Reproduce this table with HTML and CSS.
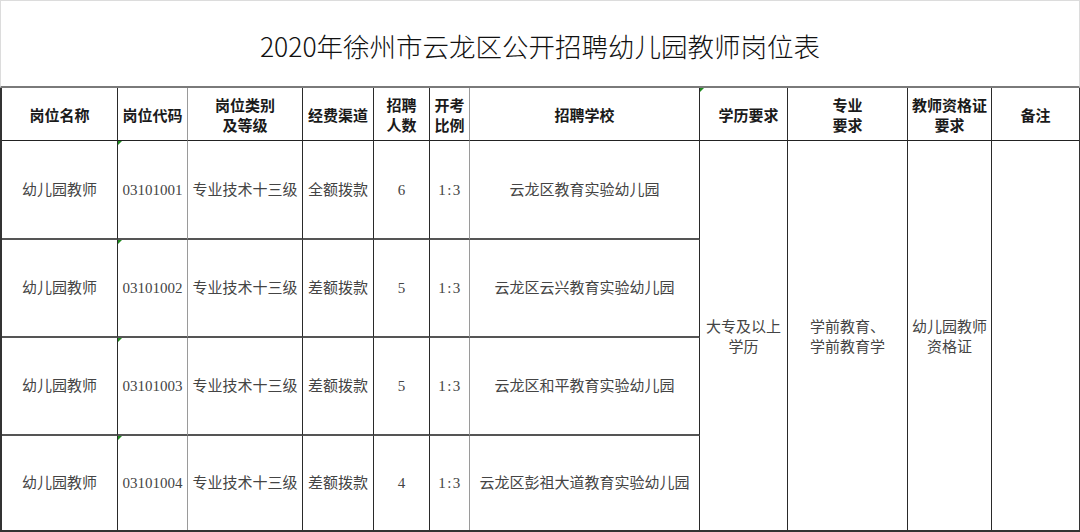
FILE: index.html
```html
<!DOCTYPE html>
<html lang="zh-CN">
<head>
<meta charset="utf-8">
<title>2020年徐州市云龙区公开招聘幼儿园教师岗位表</title>
<link rel="stylesheet" href="styles.css">
</head>
<body>
<div class="sheet">
  <div class="title">2020年徐州市云龙区公开招聘幼儿园教师岗位表</div>
  <div class="grid">
    <div class="c h">岗位名称</div>
    <div class="c h g">岗位代码</div>
    <div class="c h">岗位类别<br>及等级</div>
    <div class="c h">经费渠道</div>
    <div class="c h">招聘<br>人数</div>
    <div class="c h g">开考<br>比例</div>
    <div class="c h">招聘学校</div>
    <div class="c h mark shift">学历要求</div>
    <div class="c h">专业<br>要求</div>
    <div class="c h">教师资格证<br>要求</div>
    <div class="c h last">备注</div>

    <div class="c b">幼儿园教师</div>
    <div class="c b g mark">03101001</div>
    <div class="c b">专业技术十三级</div>
    <div class="c b">全额拨款</div>
    <div class="c b">6</div>
    <div class="c b g ratio">1:3</div>
    <div class="c b">云龙区教育实验幼儿园</div>
    <div class="c m">大专及以上<br>学历</div>
    <div class="c m">学前教育、<br>学前教育学</div>
    <div class="c m">幼儿园教师<br>资格证</div>
    <div class="c m last"></div>

    <div class="c b">幼儿园教师</div>
    <div class="c b g mark">03101002</div>
    <div class="c b">专业技术十三级</div>
    <div class="c b">差额拨款</div>
    <div class="c b">5</div>
    <div class="c b g ratio">1:3</div>
    <div class="c b">云龙区云兴教育实验幼儿园</div>

    <div class="c b">幼儿园教师</div>
    <div class="c b g mark">03101003</div>
    <div class="c b">专业技术十三级</div>
    <div class="c b">差额拨款</div>
    <div class="c b">5</div>
    <div class="c b g ratio">1:3</div>
    <div class="c b">云龙区和平教育实验幼儿园</div>

    <div class="c e">幼儿园教师</div>
    <div class="c e g mark">03101004</div>
    <div class="c e">专业技术十三级</div>
    <div class="c e">差额拨款</div>
    <div class="c e">4</div>
    <div class="c e g ratio">1:3</div>
    <div class="c e">云龙区彭祖大道教育实验幼儿园</div>
  </div>
</div>
</body>
</html>
```
FILE: styles.css
```css
* { box-sizing: border-box; }
html, body { margin: 0; padding: 0; background: #fff; }
body { width: 1080px; height: 532px; overflow: hidden; }

.sheet { width: 1080px; }

.title {
  height: 88px;
  border: 1px solid #dcdcdc;
  border-bottom: 2px solid #7a7a7a;
  display: flex;
  align-items: center;
  justify-content: center;
  padding-top: 4px;
  font-family: "Noto Sans CJK SC", sans-serif;
  font-weight: 300;
  font-size: 26.5px;
  color: #111;
}

.grid {
  display: grid;
  grid-template-columns: 116px 70px 115px 71px 56px 40px 230px 88px 120px 84px 87px;
  grid-template-rows: 53px 99px 98px 98px 94px;
  border-left: 2px solid #333;
  border-right: 1px solid #333;
  border-bottom: 2px solid #333;
  width: 1080px;
}

.c {
  position: relative;
  display: flex;
  align-items: center;
  justify-content: center;
  text-align: center;
  border-right: 1px solid #2a2a2a;
  font-family: "Liberation Serif", "Noto Sans CJK SC", serif;
  font-size: 15px;
  line-height: 20px;
  color: #444;
  white-space: nowrap;
}

.c.g { border-right-color: #9a9a9a; }
.c.last { border-right: none; }

.h {
  border-bottom: 1px solid #222;
  font-family: "Noto Sans CJK SC", sans-serif;
  font-weight: 700;
  color: #1a1a1a;
  padding-top: 2px;
}

.shift { padding-left: 10px; }

.b { border-bottom: 2px solid #555; }

.m { grid-row: span 4; padding-top: 2px; }

.ratio { letter-spacing: 1.5px; padding-left: 1px; }

.mark::before {
  content: "";
  position: absolute;
  left: 0;
  top: 0;
  width: 0;
  height: 0;
  border-top: 4px solid #1f8a1f;
  border-right: 4px solid transparent;
}
```
